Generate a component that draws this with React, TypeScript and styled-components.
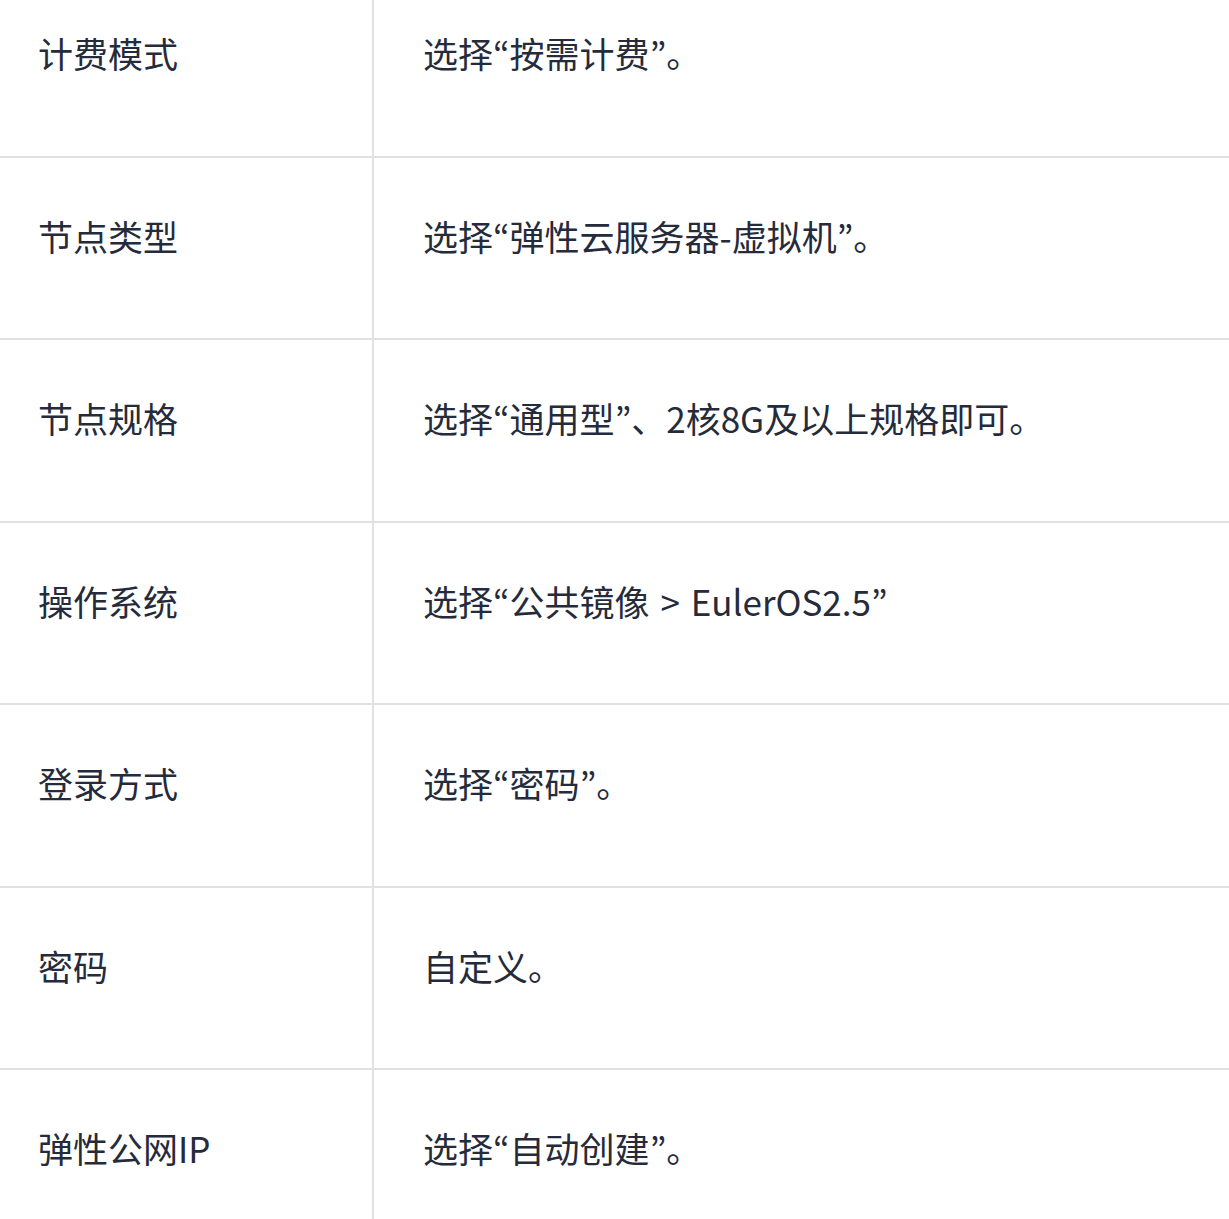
import styled, { createGlobalStyle } from "styled-components";

const GlobalStyle = createGlobalStyle`
  html, body {
    margin: 0;
    padding: 0;
    background: #ffffff;
  }
  body {
    font-family: "Noto Sans CJK SC", "Noto Sans", sans-serif;
    color: #252b3a;
    overflow: hidden;
  }
`;

export const TableWrapper = styled.div`
  width: 1229px;
  margin-top: -25px;
`;

export const TableRow = styled.div`
  display: grid;
  grid-template-columns: 374px 1fr;
  height: 182.5px;
  box-sizing: border-box;
  border-bottom: 2px solid #dfe1e6;
`;

export const LabelCell = styled.div`
  box-sizing: border-box;
  border-right: 2px solid #dfe1e6;
  padding: 52px 0 0 38px;
  font-size: 35px;
  line-height: 1.5;
  white-space: nowrap;
`;

export const ValueCell = styled.div`
  box-sizing: border-box;
  padding: 52px 0 0 49px;
  font-size: 35px;
  line-height: 1.5;
  white-space: nowrap;
  word-spacing: 3px;
`;

// latin style (proportional) quote marks, as in the reference
export const Quote = styled.span`
  font-family: "Noto Sans CJK JP", "Noto Sans", sans-serif;
`;

interface RowData {
  label: string;
  value: string;
}

const rows: RowData[] = [
  { label: "计费模式", value: "选择“按需计费”。" },
  { label: "节点类型", value: "选择“弹性云服务器-虚拟机”。" },
  { label: "节点规格", value: "选择“通用型”、2核8G及以上规格即可。" },
  { label: "操作系统", value: "选择“公共镜像 > EulerOS2.5”" },
  { label: "登录方式", value: "选择“密码”。" },
  { label: "密码", value: "自定义。" },
  { label: "弹性公网IP", value: "选择“自动创建”。" },
];

function renderValue(text: string) {
  return text.split(/([“”])/).map((part, i) =>
    part === "“" || part === "”" ? <Quote key={i}>{part}</Quote> : part
  );
}

export default function App() {
  return (
    <>
      <GlobalStyle />
      <TableWrapper>
        {rows.map((r) => (
          <TableRow key={r.label}>
            <LabelCell>{r.label}</LabelCell>
            <ValueCell>{renderValue(r.value)}</ValueCell>
          </TableRow>
        ))}
      </TableWrapper>
    </>
  );
}
